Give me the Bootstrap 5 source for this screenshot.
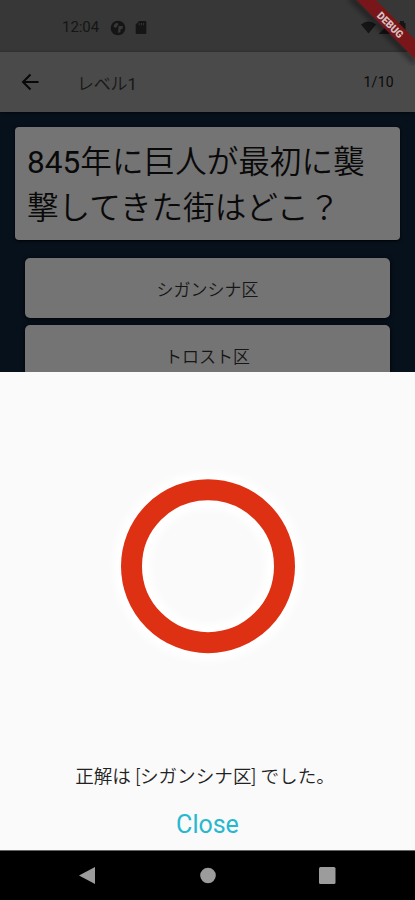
<!DOCTYPE html>
<html lang="ja">
<head>
<meta charset="utf-8">
<meta name="viewport" content="width=device-width, initial-scale=1">
<title>レベル1</title>
<link href="https://cdn.jsdelivr.net/npm/bootstrap@5.3.0/dist/css/bootstrap.min.css" rel="stylesheet">
<style>
body{font-family:Roboto,"Noto Sans CJK JP",sans-serif;background:#07111c;color:#0b0b0b}
.screen{height:900px}
.status-bar{height:52px;background:#373737;color:#151515;padding:3px 8px 0 62px;font-size:15px;letter-spacing:-.05px}
.icon-globe{margin-left:11px}
.icon-card{margin-left:9px}
.app-bar{height:60px;background:#4a4a4a;padding:0 21px 0 20px;box-shadow:0 1px 3px #0009}
.app-title{font-size:17px;margin-left:36px;padding-top:5px;color:#171717;font-weight:350;letter-spacing:-.2px}
.counter{font-size:14px;letter-spacing:.3px}
.quiz{height:260px;padding:15px 15px 0}
.question{height:113px;background:#747474;border-radius:4px;padding:13px 20px 0 12px;font-size:31.6px;line-height:46px;box-shadow:0 1px 3px #000;color:#090909;font-weight:350;white-space:nowrap}
.latin-num{font-weight:400}
.answers{padding:18px 10px 0;gap:7px}
.answer{height:60px;background:#747474;border-radius:5px;border:0;font-size:17px;color:#161616;box-shadow:0 1px 4px #000;padding:5px 0 0}
.sheet{height:478px;background:#fafafa;padding-top:91px}
.result{font-size:18.6px;line-height:28px;margin-top:90px;color:#222;white-space:nowrap;padding-right:5px}
.close-btn{font-size:25px;line-height:30px;margin-top:19px;color:#27b8d0;background:none}
.nav-keys{height:50px;background:#000;border-top:1px solid #666}
.debug-ribbon{left:345px;top:0}
.cjk-thin{font-weight:350}
</style>
<script src="https://cdn.jsdelivr.net/npm/bootstrap@5.3.0/dist/js/bootstrap.bundle.min.js"></script>
</head>
<body>
<div class="screen position-relative overflow-hidden d-flex flex-column">
  <header class="status-bar d-flex align-items-center flex-shrink-0">
    <span>12:04</span>
    <svg class="icon-globe" width="16" height="16" viewBox="0 0 16 16"><circle cx="8" cy="8" r="7.3" fill="#151515"/><path d="M3.500 6.500Q4 3.500 7 2.800L8.500 4 7 6.500 5.500 8zM8.500 6h4.300v2.500L10.500 9.500v2.500L8 13z" fill="#383838"/></svg>
    <svg class="icon-card" width="12" height="15" viewBox="0 0 12 15"><path d="M4 1h6.300q1 0 1 1v11q0 1-1 1H1.700q-1 0-1-1V4.500z" fill="#151515"/><path d="M4.200 3v2.300M6.400 3v2.300M8.600 3v2.300" stroke="#333"/></svg>
    <svg class="ms-auto" width="47" height="16" viewBox="0 0 47 16" fill="#151515"><path d="M1 4.500Q8.500-1.500 16 4.500L8.500 13.500zM32 1v13H18.500zM38 3h2V1h4v2h1.500v12H38z"/></svg>
  </header>
  <nav class="app-bar d-flex align-items-center flex-shrink-0">
    <svg width="21" height="20" viewBox="0 0 21 20" fill="none" stroke="#080808" stroke-width="2"><path d="M18.500 10H3.500M10.500 2.500L3 10l7.500 7.500"/></svg>
    <span class="app-title">レベル<span class="latin-num">1</span></span>
    <span class="counter ms-auto">1/10</span>
  </nav>
  <main class="quiz flex-shrink-0 overflow-hidden">
    <div class="question">
      <div class="d-flex"><span class="latin-num">845</span><span>年に巨人が最初に襲</span></div>
      <div>撃してきた街はどこ？</div>
    </div>
    <div class="answers d-grid">
      <button class="answer cjk-thin">シガンシナ区</button>
      <button class="answer cjk-thin">トロスト区</button>
    </div>
  </main>
  <section class="sheet d-flex flex-column align-items-center flex-shrink-0">
    <svg width="210" height="210" viewBox="0 0 210 210"><defs><filter id="soft" x="-30%" y="-30%" width="160%" height="160%"><feGaussianBlur stdDeviation="3"/></filter></defs><circle cx="105" cy="103.500" r="76" fill="none" stroke="#fff" stroke-width="37" filter="url(#soft)"/><circle cx="105" cy="103.200" r="76.500" fill="none" stroke="#de3013" stroke-width="21"/></svg>
    <div class="result cjk-thin">正解は [シガンシナ区] でした。</div>
    <button class="close-btn border-0 p-0">Close</button>
  </section>
  <footer class="nav-keys flex-shrink-0">
    <svg class="d-block" width="415" height="49" viewBox="0 0 415 49" fill="#9c9c9c"><path d="M95 16v17L79 24.500z"/><circle cx="208" cy="24.500" r="7.800"/><rect x="319" y="16" width="16.500" height="17" rx="1.500"/></svg>
  </footer>
  <svg class="debug-ribbon position-absolute" width="70" height="66" viewBox="0 0 70 66"><defs><filter id="shade"><feGaussianBlur stdDeviation="2.500"/></filter></defs><path d="M10-2L70 58V66L2-2z" fill="#000" opacity=".4" filter="url(#shade)"/><path d="M11.500 0H31L70 39.500V59z" fill="#791619"/><text transform="translate(45.300 25) rotate(45)" text-anchor="middle" y="3.700" font-size="10.500" font-weight="900" fill="#d5c3c3" textLength="32" lengthAdjust="spacingAndGlyphs" font-family="Roboto,sans-serif">DEBUG</text></svg>
</div>
</body>
</html>
